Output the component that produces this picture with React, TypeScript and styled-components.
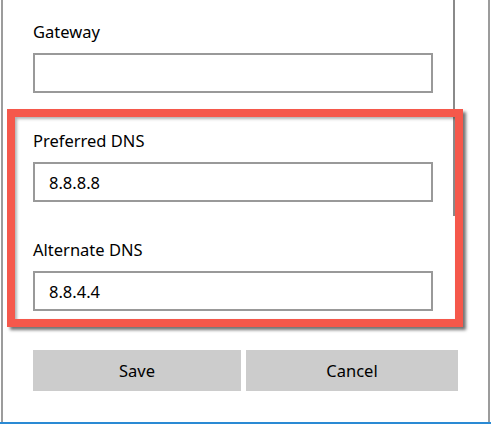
import React from "react";
import styled, { createGlobalStyle } from "styled-components";

const Global = createGlobalStyle`
  html, body { margin: 0; padding: 0; background: #ffffff; }
  body { font-family: "Noto Sans", "Open Sans", Arial, sans-serif; color: #000; }
  * { box-sizing: border-box; }
`;

const Page = styled.div`
  width: 491px;
  height: 424px;
  display: flex;
  flex-direction: column;
  overflow: hidden;
`;

const Window = styled.div`
  position: relative;
  margin-left: 1px;
  width: 489px;
  height: 422px;
  border-left: 2px solid #9c9c9c;
  border-right: 2px solid #9c9c9c;
  background: #fff;
  display: flex;
  flex-direction: column;
  padding: 22px 0 0 30px;
`;

const TaskbarEdge = styled.div`
  height: 2px;
  background: #2a8ad4;
`;

const ScrollThumb = styled.div`
  position: absolute;
  left: 450px;
  top: 0;
  width: 2px;
  height: 216px;
  background: #8a8a8a;
`;

const Field = styled.div`
  display: flex;
  flex-direction: column;
  margin-bottom: 38px;
`;

const Label = styled.div`
  font-size: 16.5px;
  line-height: 20px;
  height: 20px;
  margin-bottom: 11px;
  color: #000;
`;

const Input = styled.div`
  width: 400px;
  height: 40px;
  border: 2px solid #999;
  background: #fff;
  display: flex;
  align-items: center;
  padding-left: 14px;
  font-size: 16.5px;
  color: #000;
`;

const Buttons = styled.div`
  display: flex;
  gap: 5px;
  margin-top: 1px;
`;

const Button = styled.div<{ $w: number }>`
  width: ${(p) => p.$w}px;
  height: 41px;
  background: #cccccc;
  display: flex;
  align-items: center;
  justify-content: center;
  font-size: 16.5px;
  color: #000;
`;

const Highlight = styled.div`
  position: absolute;
  left: 4px;
  top: 109px;
  width: 456px;
  height: 218px;
  border: 8px solid #f5584b;
  box-shadow: 3px 3px 3px rgba(0, 0, 0, 0.55), inset 2px 2px 3px rgba(0, 0, 0, 0.3);
  pointer-events: none;
`;

const fields = [
  { label: "Gateway", value: "" },
  { label: "Preferred DNS", value: "8.8.8.8" },
  { label: "Alternate DNS", value: "8.8.4.4" },
];

export default function App() {
  return (
    <Page>
      <Global />
      <Window>
        <ScrollThumb />
        {fields.map((f) => (
          <Field key={f.label}>
            <Label>{f.label}</Label>
            <Input>{f.value}</Input>
          </Field>
        ))}
        <Buttons>
          <Button $w={208}>Save</Button>
          <Button $w={212}>Cancel</Button>
        </Buttons>
        <Highlight />
      </Window>
      <TaskbarEdge />
    </Page>
  );
}
